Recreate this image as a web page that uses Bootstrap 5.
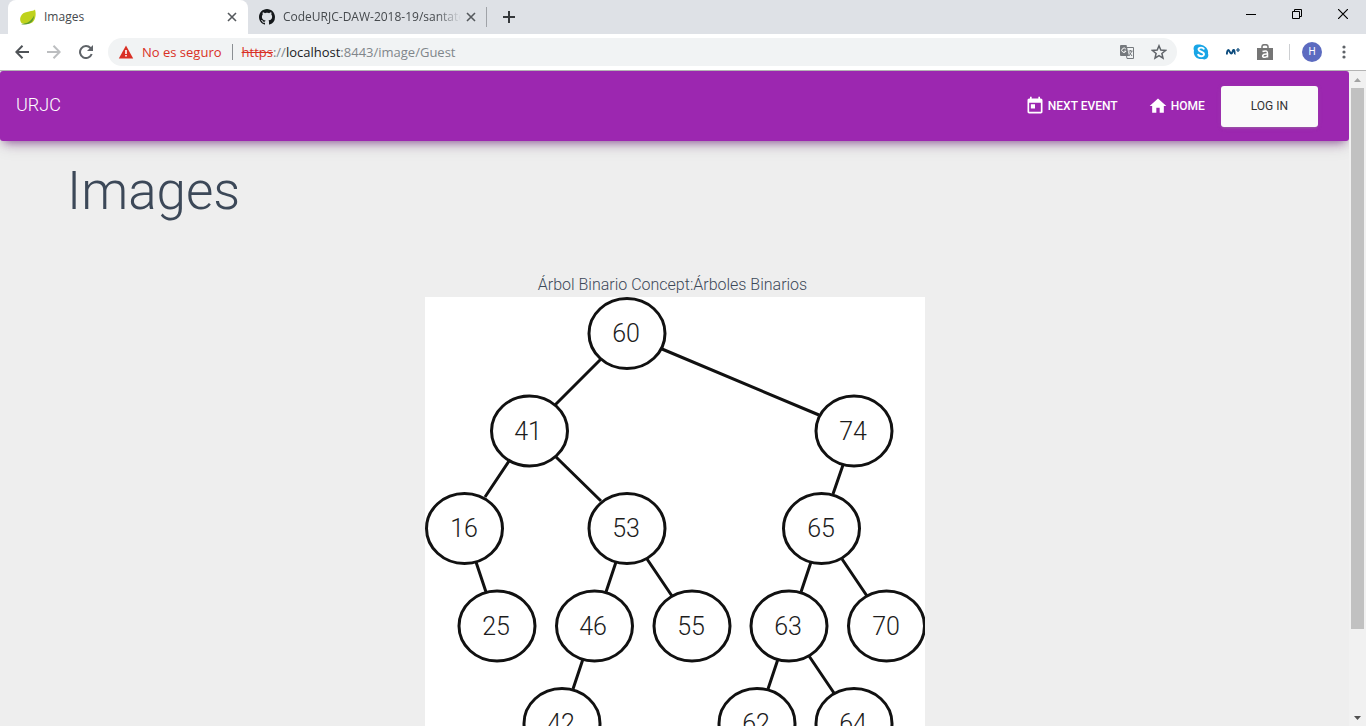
<!DOCTYPE html>
<html lang="es">
<head>
<meta charset="utf-8">
<meta name="viewport" content="width=device-width, initial-scale=1">
<title>Images</title>
<link href="https://cdn.jsdelivr.net/npm/bootstrap@5.3.0/dist/css/bootstrap.min.css" rel="stylesheet">
<style>
  body { font-family: "Open Sans", sans-serif; font-size: 12px; background: #eee; }
  button { font: inherit; }
  svg { display: block; flex: none; }
  .icon-btn { border: 0; background: none; padding: 0; color: #5f6368; display: flex; align-items: center; justify-content: center; }

  /* Browser frame */
  .tab-strip { background: #dee1e6; height: 34px; padding-left: 8px; }
  .browser-tab { width: 238px; height: 34px; padding: 0 9px 0 11px; gap: 8px; color: #45494d; }
  .browser-tab.current { width: 240px; padding: 0 10px 0 12px; background: #fff; border-radius: 8px 8px 0 0; }
  .tab-link { color: inherit; text-decoration: none; white-space: nowrap; overflow: hidden; line-height: 18px; }
  .tab-link.fade-end { margin-right: -4px; -webkit-mask-image: linear-gradient(90deg, #000 86%, transparent); mask-image: linear-gradient(90deg, #000 86%, transparent); }
  .tab-rule { width: 1px; height: 20px; background: #a0a3a8; }
  .window-buttons .icon-btn { width: 46px; height: 28px; color: #000; }
  .toolbar { background: #fff; height: 37px; border-bottom: 1px solid #b4b4b4; padding-left: 6px; }
  .toolbar .icon-btn { width: 32px; height: 28px; }
  .toolbar .menu-btn { width: 28px; }
  .omnibox { background: #f1f3f4; height: 28px; border-radius: 14px; padding: 0 2px 0 10px; margin-right: 8px; margin-left: 6px; }
  .omni-rule { width: 1px; height: 16px; background: #8b8f93; margin: 0 9px 0 10px; }
  .address { font-size: 13px; color: #80868b; line-height: 20px; }
  .unsafe { color: #d93025; }
  .address-input { border: 0; background: none; outline: 0; padding: 0; min-width: 0; }
  .host { color: #202124; }
  .ext-rule { width: 1px; height: 16px; background: #cdcfd2; margin-left: 8px; }
  .avatar-btn { width: 20px; height: 20px; border-radius: 50%; border: 0; padding: 0; margin: 0 8px 0 12px; background: #5c6bc0; color: #fff; font-size: 10px; line-height: 20px; font-family: Roboto, sans-serif; }

  /* Scroll bar */
  .scroll-track { width: 17px; background: #f1f1f1; padding: 0 2px; }
  .scroll-thumb { background: #c1c1c1; flex: 0 1 541px; }
  .scroll-arrow { height: 17px; }

  /* Page */
  .page { font-family: Roboto, sans-serif; color: #3c4858; font-weight: 300; min-width: 0; }
  .site-nav { background: #9c27b0; height: 70px; border-radius: 3px; padding: 0 31px 0 16px; color: #fff;
    box-shadow: 0 4px 18px 0 rgba(0,0,0,.12), 0 7px 10px -5px rgba(156,39,176,.4), 0 4px 8px -4px rgba(60,20,70,.4); }
  .site-brand { font-size: 18px; line-height: 26px; padding-bottom: 2px; color: #fff; text-decoration: none; }
  .site-link { color: #fff; text-decoration: none; font-size: 12px; font-weight: 500; line-height: 20px; padding: 10px 15px; gap: 3px; }
  .login-btn { background: #fafafa; color: #333; border: 0; border-radius: 3px; font-size: 12px; font-weight: 400; line-height: 17px; padding: 12px 30px; margin-left: 1px;
    box-shadow: 0 2px 2px 0 rgba(153,153,153,.14), 0 3px 1px -2px rgba(153,153,153,.2), 0 1px 5px 0 rgba(153,153,153,.12); }
  .page-title { font-size: 53px; font-weight: 300; line-height: 68px; margin: 16px 0 48px 67px; }
  .caption-text { font-size: 16px; line-height: 24px; margin: 0; padding-right: 4px; }
  .tree { width: 500px; height: 586px; background: #fff; }
  .tree text { font: 300 25px Roboto, sans-serif; fill: #1c1c1c; text-anchor: middle; }
</style>
</head>
<body>
<div class="vh-100 d-flex flex-column overflow-hidden">
  <header>
    <div class="tab-strip d-flex align-items-center">
      <div class="browser-tab current d-flex align-items-center">
        <svg width="16" height="16" viewBox="0 0 16 16"><path d="M15 .5C13.500 2.500 5 2 2 5.500-.8 9 0 12.500 1.500 14c3 1.500 10 1.800 12.500-2.500C16 8 16 4 15 .5z" fill="#bfd21c"/><path d="M1 15c6.500-.3 10.500-3 13-8.500 0 5.500-3.500 9-9 9-1.500 0-3 0-4-.5z" fill="#5b9a2f"/></svg>
        <a href="#" class="tab-link flex-grow-1">Images</a>
        <button class="icon-btn" aria-label="Cerrar pestaña"><svg width="12" height="12" viewBox="0 0 12 12"><path d="M2 2l8 8M10 2l-8 8" stroke="#55595d" stroke-width="1.6"/></svg></button>
      </div>
      <div class="browser-tab d-flex align-items-center">
        <svg width="16" height="16" viewBox="0 0 16 16"><path fill="#15181b" d="M8 0C3.580 0 0 3.580 0 8c0 3.540 2.290 6.530 5.470 7.590.4.070.55-.17.55-.38 0-.19-.010-.82-.010-1.490-2.010.37-2.530-.49-2.690-.94-.09-.23-.48-.94-.82-1.130-.28-.15-.68-.52-.010-.53.63-.010 1.080.58 1.230.82.72 1.210 1.870.87 2.330.66.070-.52.28-.87.51-1.070-1.780-.2-3.640-.89-3.640-3.950 0-.87.31-1.590.82-2.150-.08-.2-.36-1.020.08-2.120 0 0 .67-.21 2.200.82.64-.18 1.320-.27 2-.27s1.360.09 2 .27c1.530-1.040 2.200-.82 2.200-.82.44 1.100.16 1.920.08 2.120.51.56.82 1.270.82 2.150 0 3.070-1.870 3.750-3.650 3.950.29.25.54.73.54 1.480 0 1.070-.010 1.930-.010 2.200 0 .21.15.46.55.38A8 8 0 0 0 16 8c0-4.420-3.580-8-8-8z"/></svg>
        <a href="#" class="tab-link fade-end flex-grow-1">CodeURJC-DAW-2018-19/santatecla</a>
        <button class="icon-btn" aria-label="Cerrar pestaña"><svg width="12" height="12" viewBox="0 0 12 12"><path d="M2 2l8 8M10 2l-8 8" stroke="#55595d" stroke-width="1.6"/></svg></button>
      </div>
      <span class="tab-rule"></span>
      <button class="icon-btn ms-3" aria-label="Nueva pestaña"><svg width="12" height="12" viewBox="0 0 12 12"><path d="M6 0v12M0 6h12" stroke="#35383b" stroke-width="2"/></svg></button>
      <div class="window-buttons d-flex ms-auto align-self-start">
        <button class="icon-btn" aria-label="Minimizar"><svg width="10" height="10" viewBox="0 0 10 10"><path d="M0 5.500h10" stroke="#000"/></svg></button>
        <button class="icon-btn" aria-label="Restaurar"><svg width="10" height="10" viewBox="0 0 10 10" fill="none" stroke="#000"><path d="M.5 2.500h7v7h-7zM2.500 2.500v-2h7v7h-2"/></svg></button>
        <button class="icon-btn" aria-label="Cerrar"><svg width="10" height="10" viewBox="0 0 10 10"><path d="M0 0l10 10M10 0L0 10" stroke="#000" stroke-width="1.200"/></svg></button>
      </div>
    </div>
    <div class="toolbar d-flex align-items-center">
      <button class="icon-btn" aria-label="Atrás"><svg width="14" height="14" viewBox="0 0 14 14" fill="none" stroke="#4f5357" stroke-width="2"><path d="M14 7H1.500M7.500.8L1.300 7l6.200 6.200"/></svg></button>
      <button class="icon-btn" aria-label="Adelante"><svg width="14" height="14" viewBox="0 0 14 14" fill="none" stroke="#bcbec0" stroke-width="2"><path d="M0 7h12.500M6.500.8L12.700 7l-6.200 6.200"/></svg></button>
      <button class="icon-btn" aria-label="Recargar"><svg width="14" height="14" viewBox="0 0 14 14" fill="none" stroke="#5f6368" stroke-width="2"><path d="M12.700 9A6 6 0 1 1 11.500 3l1 1"/><path d="M14 0v6H8z" fill="#5f6368" stroke="none"/></svg></button>
      <div class="omnibox d-flex align-items-center flex-grow-1">
        <svg width="16" height="16" viewBox="0 0 16 16"><path d="M8 1.500L15.200 14.500H.8z" fill="#d93025"/><path d="M7.200 6h1.600v4H7.200zM7.200 11h1.600v1.600H7.200z" fill="#fff"/></svg>
        <span class="address unsafe ms-2">No es seguro</span>
        <span class="omni-rule"></span>
        <label for="address" class="address text-nowrap"><s class="unsafe">https</s>://<span class="host">localhost</span></label>
        <input id="address" type="text" class="address address-input flex-grow-1" value=":8443/image/Guest">
        <button class="icon-btn" aria-label="Traducir"><svg width="14" height="14" viewBox="0 0 14 14"><path d="M5 2.500h8.500v11H7z" fill="#f1f3f4" stroke="#75797d"/><path d="M1 0h5.500L9 11H1a1 1 0 0 1-1-1V1a1 1 0 0 1 1-1z" fill="#75797d"/><path d="M5.800 4A2.200 2.200 0 1 0 6 6.200H4.200" fill="none" stroke="#fff"/><path d="M8.500 6h4M10.500 5v1M9 11l3-5M9.500 7.500l2.500 3.500" fill="none" stroke="#75797d"/></svg></button>
        <button class="icon-btn" aria-label="Favorito"><svg width="16" height="16" viewBox="0 0 16 16"><path d="M8 1.800l1.800 4.300 4.700.4-3.600 3 1.100 4.600L8 11.700l-4 2.400 1.100-4.600-3.600-3 4.700-.4z" fill="none" stroke="#5f6368" stroke-width="1.500"/></svg></button>
      </div>
      <button class="icon-btn" aria-label="Skype"><svg width="16" height="16" viewBox="0 0 16 16"><path d="M4.500.5C9 0 16 3 15 9.500c1.500 4-2 7-5.500 5.500C3 15.500 0 11 1 6.500-.5 3 2 .5 4.500.5z" fill="#18a5e6"/><path d="M11 5.500C10.500 3 5.500 3 5.500 5.500S11 7.500 11 10.200 5.500 13 5 10" fill="none" stroke="#fff" stroke-width="1.900"/></svg></button>
      <button class="icon-btn" aria-label="Movistar"><svg width="14" height="8" viewBox="0 0 14 8" fill="none" stroke="#0b4a7c"><path d="M.8 6.500C1 3 2 1.200 3 2.500S4.500 6 5.500 5.500 7 1 8 2s0 4 1.500 4" stroke-width="1.900"/><path d="M12 0v4M10 2h4" stroke-width="1.200"/></svg></button>
      <button class="icon-btn" aria-label="Extensión"><svg width="16" height="16" viewBox="0 0 16 16"><path d="M0 4h16v12H0z" fill="#757575"/><path d="M5 5V2.500C5 0 11 0 11 2.500V5" fill="none" stroke="#757575" stroke-width="1.500"/><path d="M5.500 7.500c4-1.500 5 0 5 2v4M10.500 10c-6-.5-6 3.800-2.500 3.300 1.500-.3 2.500-1.300 2.500-1.300" fill="none" stroke="#fff" stroke-width="1.500"/></svg></button>
      <span class="ext-rule"></span>
      <button class="avatar-btn" aria-label="Perfil">H</button>
      <button class="icon-btn menu-btn me-2" aria-label="Menú"><svg width="4" height="14" viewBox="0 0 4 14" fill="#5f6368"><circle cx="2" cy="2" r="1.600"/><circle cx="2" cy="7" r="1.600"/><circle cx="2" cy="12" r="1.600"/></svg></button>
    </div>
  </header>

  <div class="d-flex flex-grow-1 overflow-hidden">
    <main class="page flex-grow-1 overflow-hidden">
      <nav class="site-nav d-flex align-items-center">
        <a href="#" class="site-brand me-auto">URJC</a>
        <a href="#" class="site-link d-flex align-items-center"><svg width="20" height="20" viewBox="0 0 24 24" fill="#fff"><path d="M19 3h-1V1h-2v2H8V1H6v2H5c-1.110 0-2 .9-2 2v14c0 1.100.89 2 2 2h14c1.100 0 2-.9 2-2V5c0-1.100-.9-2-2-2zm0 16H5V8h14v11zM7 10h5v5H7z"/></svg>NEXT EVENT</a>
        <a href="#" class="site-link d-flex align-items-center"><svg width="20" height="20" viewBox="0 0 24 24" fill="#fff"><path d="M10 20v-6h4v6h5v-8h3L12 3 2 12h3v8z"/></svg>HOME</a>
        <button class="login-btn">LOG IN</button>
      </nav>
      <h1 class="page-title">Images</h1>
      <div class="d-flex flex-column align-items-center">
        <p class="caption-text">Árbol Binario Concept:Árboles Binarios</p>
        <svg class="tree" viewBox="0 0 500 586" role="img" aria-label="Árbol binario">
          <g stroke="#111" stroke-width="3">
            <path d="M176 62L129 109M237 52L394 118M84 164L60 200M131 160L176 204M418 168L408 197M51 265L61 295M191 265L181 295M222 262L247 299M386 265L376 295M417 262L442 299M158 362L148 392M353 362L343 392M384 359L409 396"/>
          </g>
          <g fill="#fff" stroke="#111" stroke-width="3">
            <ellipse cx="202" cy="36.500" rx="38" ry="35"/>
            <ellipse cx="104.500" cy="134" rx="38" ry="35"/>
            <ellipse cx="429" cy="134" rx="38" ry="35"/>
            <ellipse cx="39.500" cy="231.500" rx="38" ry="35"/>
            <ellipse cx="202" cy="231.500" rx="38" ry="35"/>
            <ellipse cx="396.500" cy="231.500" rx="38" ry="35"/>
            <ellipse cx="72" cy="329" rx="38" ry="35"/>
            <ellipse cx="169.500" cy="329" rx="38" ry="35"/>
            <ellipse cx="267" cy="329" rx="38" ry="35"/>
            <ellipse cx="364" cy="329" rx="38" ry="35"/>
            <ellipse cx="461.500" cy="329" rx="38" ry="35"/>
            <ellipse cx="137" cy="426.500" rx="38" ry="35"/>
            <ellipse cx="332" cy="426.500" rx="38" ry="35"/>
            <ellipse cx="429" cy="426.500" rx="38" ry="35"/>
          </g>
          <text x="201" y="45">60</text>
          <text x="103" y="143">41</text>
          <text x="428" y="143">74</text>
          <text x="39" y="240">16</text>
          <text x="201" y="240">53</text>
          <text x="396" y="240">65</text>
          <text x="71" y="338">25</text>
          <text x="168" y="338">46</text>
          <text x="266" y="338">55</text>
          <text x="363" y="338">63</text>
          <text x="461" y="338">70</text>
          <text x="136" y="435">42</text>
          <text x="331" y="435">62</text>
          <text x="428" y="435">64</text>
        </svg>
      </div>
    </main>
    <div class="scroll-track d-flex flex-column" aria-hidden="true">
      <svg class="scroll-arrow" width="13" height="17" viewBox="0 0 13 17"><path d="M3 11l3.500-4 3.500 4z" fill="#a3a3a3"/></svg>
      <div class="scroll-thumb"></div>
      <svg class="scroll-arrow mt-auto" width="13" height="17" viewBox="0 0 13 17"><path d="M3 7l3.500 4L10 7z" fill="#505050"/></svg>
    </div>
  </div>
</div>
<script src="https://cdn.jsdelivr.net/npm/bootstrap@5.3.0/dist/js/bootstrap.bundle.min.js"></script>
</body>
</html>
